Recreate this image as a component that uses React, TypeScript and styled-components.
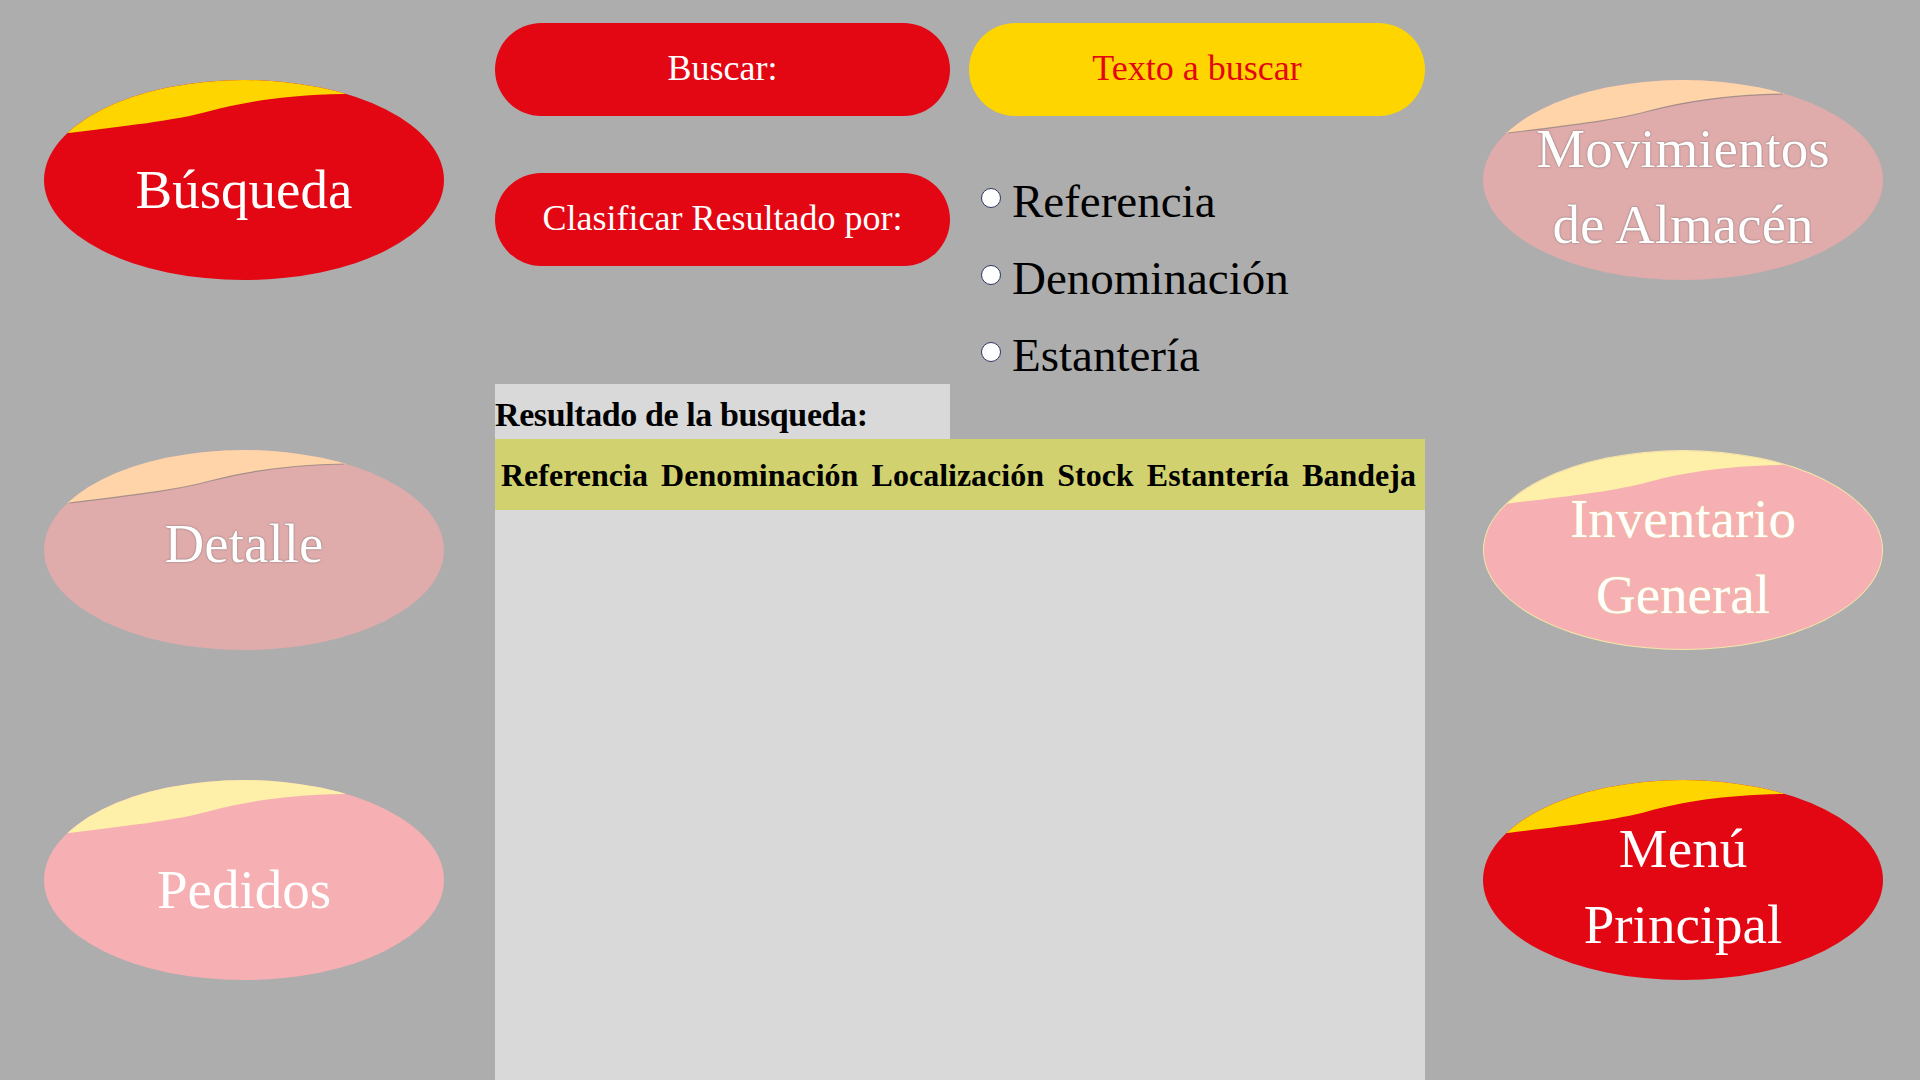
import React, { FC } from 'react'
import styled, { createGlobalStyle } from 'styled-components'

const GlobalStyle = createGlobalStyle`
    html, body {
        margin: 0;
        padding: 0;
        background: #adadad;
    }
    body {
        font-family: "Liberation Serif", "Times New Roman", serif;
    }
`

const RED = '#e30613'
const YELLOW = '#ffd500'

interface IOvalTheme {
    fill: string;
    swoosh: string;
    line?: string;
    edge?: string;
    glow?: string;
}

const THEMES: Record<string, IOvalTheme> = {
    active: { fill: RED, swoosh: YELLOW },
    dim: { fill: '#e0abab', swoosh: '#ffd4a9', line: 'rgba(110,110,110,0.55)', glow: 'rgba(90,90,90,0.55)' },
    soft: { fill: '#f6afb2', swoosh: '#fff0a9' },
    softEdged: { fill: '#f6afb2', swoosh: '#fff0a9', edge: '#f3e8a6', glow: 'rgba(235,220,150,0.9)' },
}

const Page = styled.div`
    width: 1920px;
    height: 1080px;
    overflow: hidden;
    display: flex;
    padding: 0 37px 0 44px;
    box-sizing: border-box;
    background: #adadad;
`

const SideColumn = styled.nav`
    width: 400px;
    flex: none;
    display: flex;
    flex-direction: column;
`

const Oval = styled.button<{ $theme: IOvalTheme; $top: number; $dy: number }>`
    position: relative;
    width: 400px;
    height: 200px;
    margin-top: ${p => p.$top}px;
    padding: ${p => (p.$dy > 0 ? `${p.$dy * 2}px 0 0` : `0 0 ${-p.$dy * 2}px`)};
    border: ${p => (p.$theme.edge ? `1px solid ${p.$theme.edge}` : 'none')};
    border-radius: 50%;
    overflow: hidden;
    background: ${p => p.$theme.fill};
    display: flex;
    align-items: center;
    justify-content: center;
    box-sizing: border-box;
    cursor: pointer;
    font-family: inherit;
`

const Swoosh = styled.svg`
    position: absolute;
    inset: 0;
    width: 100%;
    height: 100%;
`

const OvalLabel = styled.span<{ $glow?: string }>`
    position: relative;
    color: #ffffff;
    font-size: 55px;
    line-height: 76px;
    text-align: center;
    text-shadow: ${p => (p.$glow ? `0 0 2px ${p.$glow}, 0 0 1px ${p.$glow}` : 'none')};
`

const CURVE = 'M25 53 C 80 46, 130 41, 166 31 C 200 22, 240 15, 300 14'

interface IOvalProps {
    lines: string[];
    kind: keyof typeof THEMES;
    top: number;
    dy: number;
}

const OvalButton: FC<IOvalProps> = ({ lines, kind, top, dy }) => {
    const theme = THEMES[kind]
    return (
        <Oval $theme={theme} $top={top} $dy={dy}>
            <Swoosh viewBox="0 0 400 200" preserveAspectRatio="none">
                <path d={`${CURVE} L 420 -10 L -10 -10 L -10 53 Z`} fill={theme.swoosh} />
                {theme.line && <path d={CURVE} fill="none" stroke={theme.line} strokeWidth="1.2" />}
            </Swoosh>
            <OvalLabel $glow={theme.glow}>
                {lines.map((l, i) => (
                    <React.Fragment key={i}>
                        {i > 0 && <br />}
                        {l}
                    </React.Fragment>
                ))}
            </OvalLabel>
        </Oval>
    )
}

const Center = styled.main`
    width: 930px;
    flex: none;
    margin: 0 58px 0 51px;
    display: flex;
    flex-direction: column;
`

const PairRow = styled.div<{ $top: number }>`
    display: grid;
    grid-template-columns: 455px 456px;
    column-gap: 19px;
    align-items: start;
    margin-top: ${p => p.$top}px;
`

const Pill = styled.div<{ $bg: string; $fg: string }>`
    height: 93px;
    padding-bottom: 4px;
    box-sizing: border-box;
    border-radius: 47px;
    background: ${p => p.$bg};
    color: ${p => p.$fg};
    font-size: 36px;
    display: flex;
    align-items: center;
    justify-content: center;
    white-space: nowrap;
`

const RadioGroup = styled.div`
    display: flex;
    flex-direction: column;
    gap: 22px;
    padding-left: 12px;
    margin-top: 1px;
`

const RadioRow = styled.label`
    display: flex;
    align-items: flex-start;
    gap: 11px;
    height: 55px;
    font-size: 47px;
    line-height: 55px;
    color: #000;
    cursor: pointer;
`

const RadioDot = styled.input`
    appearance: none;
    width: 20px;
    height: 20px;
    margin: 14px 0 0;
    border-radius: 50%;
    border: 1.3px solid #2c3761;
    background: #ffffff;
    box-sizing: border-box;
    flex: none;
`

const Results = styled.section`
    flex: 1;
    display: flex;
    flex-direction: column;
    margin-top: 1px;
`

const ResultsTitle = styled.div`
    width: 455px;
    height: 55px;
    padding-top: 12px;
    box-sizing: border-box;
    background: #d9d9d9;
    font-size: 34px;
    font-weight: bold;
    line-height: 37px;
    letter-spacing: -0.4px;
    color: #000;
    white-space: nowrap;
`

const TableHead = styled.div`
    height: 71px;
    padding: 2px 9px 0 6px;
    box-sizing: border-box;
    background: #d1d26f;
    display: flex;
    align-items: center;
    justify-content: space-between;
`

const HeadCell = styled.span`
    font-size: 32px;
    font-weight: bold;
    color: #000;
    white-space: nowrap;
`

const TableBody = styled.div`
    flex: 1;
    background: #d9d9d9;
`

const COLUMNS = ['Referencia', 'Denominación', 'Localización', 'Stock', 'Estantería', 'Bandeja']
const SORT_OPTIONS = ['Referencia', 'Denominación', 'Estantería']

export default function App() {
    return (
        <>
            <GlobalStyle />
            <Page>
                <SideColumn>
                    <OvalButton lines={['Búsqueda']} kind="active" top={80} dy={10} />
                    <OvalButton lines={['Detalle']} kind="dim" top={170} dy={-6} />
                    <OvalButton lines={['Pedidos']} kind="soft" top={130} dy={10} />
                </SideColumn>

                <Center>
                    <PairRow $top={23}>
                        <Pill $bg={RED} $fg="#ffffff">Buscar:</Pill>
                        <Pill $bg={YELLOW} $fg={RED}>Texto a buscar</Pill>
                    </PairRow>
                    <PairRow $top={57}>
                        <Pill $bg={RED} $fg="#ffffff">Clasificar Resultado por:</Pill>
                        <RadioGroup>
                            {SORT_OPTIONS.map(o => (
                                <RadioRow key={o}>
                                    <RadioDot type="radio" name="orden" />
                                    {o}
                                </RadioRow>
                            ))}
                        </RadioGroup>
                    </PairRow>
                    <Results>
                        <ResultsTitle>Resultado de la busqueda:</ResultsTitle>
                        <TableHead>
                            {COLUMNS.map(c => <HeadCell key={c}>{c}</HeadCell>)}
                        </TableHead>
                        <TableBody />
                    </Results>
                </Center>

                <SideColumn>
                    <OvalButton lines={['Movimientos', 'de Almacén']} kind="dim" top={80} dy={7} />
                    <OvalButton lines={['Inventario', 'General']} kind="softEdged" top={170} dy={7} />
                    <OvalButton lines={['Menú', 'Principal']} kind="active" top={130} dy={7} />
                </SideColumn>
            </Page>
        </>
    )
}
